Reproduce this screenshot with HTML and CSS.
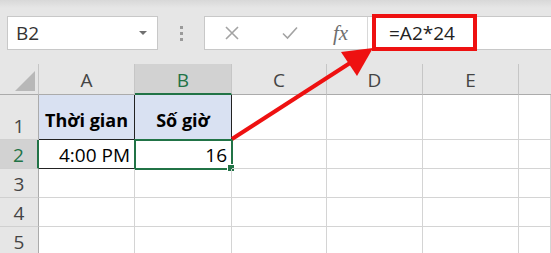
FILE: index.html
```html
<!DOCTYPE html>
<html lang="vi">

<head>
    <meta charset="UTF-8">
    <meta name="viewport" content="width=device-width, initial-scale=1.0">
    <title>Số giờ</title>
    <link rel="stylesheet" href="styles.css">
</head>

<body>

    <div class="topbar">
        <div class="namebox">
            <span class="ref">B2</span>
            <span class="drop"></span>
        </div>
        <div class="dots"><i></i><i></i><i></i></div>
        <div class="formulabar">
            <div class="tools">
                <svg class="ico" width="14" height="14" viewBox="0 0 14 14"><path d="M1 1L13 13M13 1L1 13" stroke="#a3a3a3" stroke-width="1.6" fill="none"/></svg>
                <svg class="ico" width="16" height="14" viewBox="0 0 16 14"><path d="M1 7.5L5.5 12L15 1.5" stroke="#a3a3a3" stroke-width="1.6" fill="none"/></svg>
                <span class="fx">fx</span>
            </div>
            <div class="content">=A2*24</div>
        </div>
    </div>

    <div class="sheet">
        <div class="corner"><span class="tri"></span></div>
        <div class="colhead">A</div>
        <div class="colhead sel">B</div>
        <div class="colhead">C</div>
        <div class="colhead">D</div>
        <div class="colhead">E</div>
        <div class="colhead last"></div>

        <div class="rowhead">1</div>
        <div class="cell title bl">Thời gian</div>
        <div class="cell title bl">Số giờ</div>
        <div class="cell"></div>
        <div class="cell"></div>
        <div class="cell"></div>
        <div class="cell"></div>

        <div class="rowhead sel">2</div>
        <div class="cell num bl">4:00 PM</div>
        <div class="cell num bl active">16<span class="handle"></span></div>
        <div class="cell"></div>
        <div class="cell"></div>
        <div class="cell"></div>
        <div class="cell"></div>

        <div class="rowhead">3</div>
        <div class="cell"></div>
        <div class="cell"></div>
        <div class="cell"></div>
        <div class="cell"></div>
        <div class="cell"></div>
        <div class="cell"></div>

        <div class="rowhead">4</div>
        <div class="cell"></div>
        <div class="cell"></div>
        <div class="cell"></div>
        <div class="cell"></div>
        <div class="cell"></div>
        <div class="cell"></div>

        <div class="rowhead">5</div>
        <div class="cell"></div>
        <div class="cell"></div>
        <div class="cell"></div>
        <div class="cell"></div>
        <div class="cell"></div>
        <div class="cell"></div>
    </div>

    <!-- chu thich: khung do va mui ten -->
    <div class="callout"></div>
    <svg class="arrow" width="551" height="253" viewBox="0 0 551 253">
        <line x1="232" y1="139" x2="350" y2="63" stroke="#ee1111" stroke-width="4"/>
        <polygon points="341,52 357,76 373,48" fill="#ee1111"/>
    </svg>

</body>

</html>
```

FILE: styles.css
```css
body {
    margin: 0;
    width: 551px;
    height: 253px;
    overflow: hidden;
    background-color: #e6e6e6;
    font-family: "Open Sans", "Noto Sans", sans-serif;
    position: relative;
}

.topbar {
    display: flex;
    height: 64px;
    padding-top: 16px;
    box-sizing: border-box;
    align-items: flex-start;
    background: linear-gradient(#d8d8d8 0, #e6e6e6 8px);
}

.namebox {
    margin-left: 7px;
    width: 151px;
    height: 34px;
    box-sizing: border-box;
    background-color: #fff;
    border: 1px solid #c8c8c8;
    display: flex;
    align-items: center;
    justify-content: space-between;
    padding: 0 10px 0 8px;
}

.ref {
    font-size: 19px;
    color: #333;
}

.drop {
    width: 0;
    height: 0;
    border-left: 4px solid transparent;
    border-right: 4px solid transparent;
    border-top: 4px solid #707070;
}

.dots {
    width: 46px;
    height: 34px;
    display: flex;
    flex-direction: column;
    align-items: center;
    justify-content: center;
    gap: 3px;
}

.dots i {
    width: 3px;
    height: 3px;
    background-color: #9a9a9a;
}

.formulabar {
    flex: 1;
    height: 34px;
    box-sizing: border-box;
    background-color: #fff;
    border: 1px solid #c8c8c8;
    border-right: none;
    display: flex;
}

.tools {
    width: 163px;
    border-right: 1px solid #d8d8d8;
    display: flex;
    align-items: center;
    padding-left: 20px;
    box-sizing: border-box;
}

.tools .ico {
    margin-right: 43px;
}

.tools .ico + .ico {
    margin-right: 35px;
}

.fx {
    font-family: "Liberation Serif", "DejaVu Serif", serif;
    font-style: italic;
    font-size: 21px;
    color: #6f6f6f;
}

.content {
    padding-left: 21px;
    font-size: 19px;
    color: #222;
    line-height: 32px;
}

.sheet {
    display: grid;
    grid-template-columns: 39px 96px 97px 95px 96px 96px 1fr;
    grid-template-rows: 31px 45px 29px 29px 29px 29px;
    background-color: #fff;
}

.corner,
.colhead,
.rowhead {
    background-color: #e6e6e6;
    color: #444;
    font-size: 19px;
    box-sizing: border-box;
}

.corner {
    border-bottom: 1px solid #ababab;
    border-right: 1px solid #c6c6c6;
    position: relative;
}

.tri {
    position: absolute;
    right: 3px;
    bottom: 3px;
    width: 0;
    height: 0;
    border-left: 20px solid transparent;
    border-bottom: 20px solid #b8b8b8;
}

.colhead {
    display: flex;
    align-items: center;
    justify-content: center;
    border-bottom: 1px solid #ababab;
    border-right: 1px solid #c6c6c6;
    padding-top: 2px;
}

.colhead.last {
    border-right: none;
}

.colhead.sel {
    background-color: #d2d2d2;
    color: #217346;
    border-bottom: 2px solid #217346;
}

.rowhead {
    display: flex;
    align-items: flex-end;
    justify-content: center;
    border-bottom: 1px solid #d0d0d0;
    border-right: 1px solid #ababab;
    padding-bottom: 0;
    line-height: 26px;
}

.rowhead.sel {
    background-color: #d2d2d2;
    color: #217346;
    border-right: 2px solid #217346;
}

.cell {
    box-sizing: border-box;
    border-right: 1px solid #d4d4d4;
    border-bottom: 1px solid #d4d4d4;
    font-size: 19px;
    color: #000;
    display: flex;
    align-items: flex-end;
    padding: 0 4px 0;
    line-height: 26px;
    position: relative;
}

.bl {
    border-right: 1px solid #222;
    border-bottom: 1px solid #222;
}

.title {
    background-color: #d9e1f2;
    font-weight: bold;
    font-size: 18px;
    justify-content: center;
    padding-bottom: 6px;
}

.num {
    justify-content: flex-end;
}

.active {
    outline: 2px solid #217346;
    outline-offset: -1px;
}

.handle {
    position: absolute;
    right: -4px;
    bottom: -4px;
    width: 6px;
    height: 6px;
    background-color: #217346;
    border: 1px solid #fff;
}

.callout {
    position: absolute;
    left: 372px;
    top: 14px;
    width: 105px;
    height: 37px;
    box-sizing: border-box;
    border: 4px solid #ee1111;
}

.arrow {
    position: absolute;
    left: 0;
    top: 0;
}
```
